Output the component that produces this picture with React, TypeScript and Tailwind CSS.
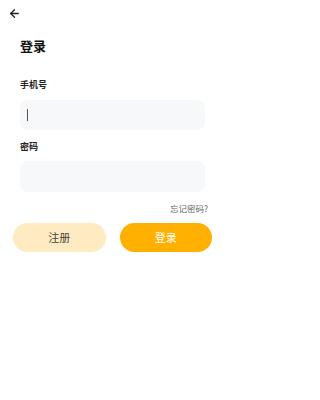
import { ArrowLeft } from "lucide-react";

export default function App() {
  return (
    <div
      className="w-[225px] h-[400px] bg-white flex flex-col"
      style={{ fontFamily: '"Noto Sans CJK SC", "Noto Sans", sans-serif' }}
    >
      {/* Header */}
      <div className="h-[26px] flex items-center pl-[8px]">
        <ArrowLeft size={13} strokeWidth={2.4} className="text-[#222]" />
      </div>

      <h1 className="mt-[12px] px-[20px] text-[13px] leading-[16px] font-bold text-[#111]">登录</h1>

      {/* Form */}
      <div className="flex flex-col px-[20px] mt-[25px]">
        <label className="text-[9px] leading-[12px] font-bold text-[#222]">手机号</label>
        <div className="mt-[9px] h-[30px] rounded-[8px] bg-[#f7f8fa] flex items-center pl-[7px]">
          <span className="w-[1px] h-[12px] bg-[#555]" />
        </div>

        <label className="mt-[11px] text-[9px] leading-[12px] font-bold text-[#222]">密码</label>
        <div className="mt-[8px] h-[31px] rounded-[8px] bg-[#f7f8fa]" />

        <div className="mt-[10px] flex justify-end -mr-[3px]">
          <span className="text-[8.5px] leading-[12px] text-[#666]">忘记密码?</span>
        </div>
      </div>

      {/* Buttons */}
      <div className="mt-[9px] px-[13px] flex gap-[14px]">
        <button className="flex-1 h-[29px] rounded-full bg-[#ffebc2] text-[11px] text-[#444]">注册</button>
        <button className="flex-1 h-[29px] rounded-full bg-[#ffb000] text-[11px] text-white">登录</button>
      </div>
    </div>
  );
}
